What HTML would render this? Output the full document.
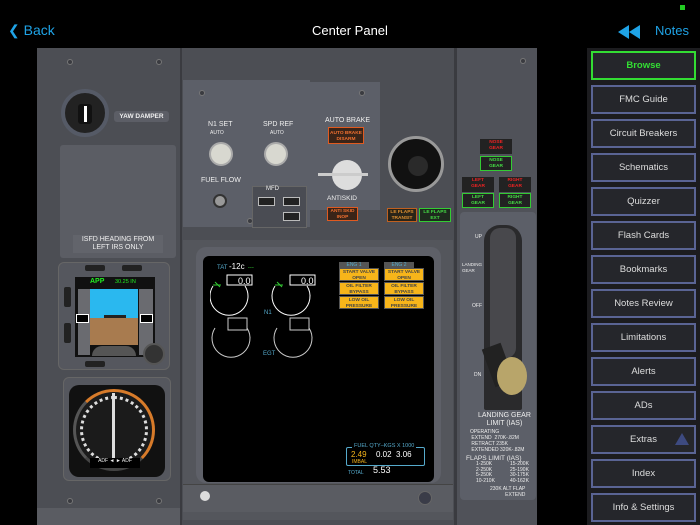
<!DOCTYPE html>
<html><head><meta charset="utf-8"><style>
*{margin:0;padding:0;box-sizing:border-box}
body{width:700px;height:525px;background:#000;position:relative;overflow:hidden;font-family:"Liberation Sans",sans-serif}
.a{position:absolute}
.t{position:absolute;white-space:nowrap}
.btn{position:absolute;left:591px;width:105px;height:29px;background:#25262b;border:2px solid #5a6494;color:#ddd;font-size:9.5px;text-align:center;line-height:25px}
.scr{position:absolute;width:6px;height:6px;border-radius:50%;background:#3a3b40;border:1px solid #777}
.ann{position:absolute;font-size:4.8px;text-align:center;line-height:5.5px;font-weight:bold;padding-top:1px;overflow:hidden}
</style></head><body>
<div class="a" style="left:680px;top:5px;width:5px;height:5px;background:#2c2"></div>
<div class="t" style="left:8px;top:22px;color:#1fa3e6;font-size:14px">&#x276E;&nbsp;Back</div>
<div class="t" style="left:0;width:700px;top:23px;text-align:center;color:#fff;font-size:13px">Center Panel</div>
<svg class="a" style="left:618px;top:25px" width="24" height="14"><polygon points="0,7 11,0 11,14" fill="#1fa3e6"/><polygon points="11,7 22,0 22,14" fill="#1fa3e6"/></svg>
<div class="t" style="left:655px;top:23px;color:#1fa3e6;font-size:13px">Notes</div>

<div class="a" style="left:37px;top:48px;width:500px;height:477px;background:#4c4e54"></div>
<div class="a" style="left:180px;top:48px;width:2px;height:477px;background:#3a3b40"></div>
<div class="a" style="left:454px;top:48px;width:3px;height:477px;background:#3a3b40"></div>
<div class="a" style="left:457px;top:48px;width:80px;height:477px;background:#505259"></div>
<div class="a" style="left:37px;top:508px;width:143px;height:17px;background:#5a5c62"></div>
<div class="scr" style="left:67px;top:59px"></div><div class="scr" style="left:156px;top:59px"></div>
<div class="scr" style="left:67px;top:498px"></div><div class="scr" style="left:156px;top:498px"></div>
<div class="a" style="left:61px;top:89px;width:48px;height:48px;border-radius:50%;background:#222;border:4px solid #555a66"></div>
<div class="a" style="left:78px;top:104px;width:14px;height:20px;background:#111;border-radius:3px"></div>
<div class="a" style="left:84px;top:106px;width:3px;height:16px;background:#fff"></div>
<div class="t" style="left:114px;top:111px;width:55px;height:11px;background:#5c5e66;border-radius:3px;color:#eee;font-size:6.5px;font-weight:bold;text-align:center;line-height:11px">YAW DAMPER</div>
<div class="a" style="left:60px;top:145px;width:116px;height:113px;background:#5b5d64;border-radius:3px"></div>
<div class="t" style="left:73px;top:235px;width:90px;height:18px;background:#62646b;color:#eee;font-size:7px;text-align:center;line-height:8px;padding-top:1px">ISFD HEADING FROM<br>LEFT IRS ONLY</div>
<div class="a" style="left:58px;top:262px;width:112px;height:108px;background:#55575e;border-radius:6px;border:1px solid #666"></div>
<div class="a" style="left:75px;top:277px;width:80px;height:80px;background:#111"></div>
<div class="a" style="left:90px;top:289px;width:48px;height:29px;background:#2ab8ef"></div>
<div class="a" style="left:90px;top:318px;width:48px;height:27px;background:#a87b4f"></div>
<div class="a" style="left:78px;top:289px;width:12px;height:66px;background:#6a6b70"></div>
<div class="a" style="left:139px;top:289px;width:14px;height:66px;background:#6a6b70"></div>
<div class="t" style="left:90px;top:278px;color:#2e2;font-size:7px;font-weight:bold">APP</div>
<div class="t" style="left:115px;top:279px;color:#2e2;font-size:5.5px">30.25 IN</div>
<div class="a" style="left:104px;top:315px;width:22px;height:3px;background:#222"></div>
<div class="a" style="left:140px;top:314px;width:13px;height:9px;background:#000;border:1px solid #fff"></div>
<div class="a" style="left:76px;top:314px;width:13px;height:9px;background:#000;border:1px solid #fff"></div>
<div class="a" style="left:92px;top:346px;width:44px;height:10px;background:#555;border-radius:20px 20px 0 0"></div>
<div class="a" style="left:64px;top:287px;width:7px;height:20px;background:#222;border-radius:2px"></div>
<div class="a" style="left:64px;top:323px;width:7px;height:20px;background:#222;border-radius:2px"></div>
<div class="a" style="left:143px;top:343px;width:22px;height:22px;border-radius:50%;background:#333;border:2px solid #555"></div>
<div class="a" style="left:85px;top:265px;width:20px;height:6px;background:#222;border-radius:2px"></div>
<div class="a" style="left:122px;top:265px;width:20px;height:6px;background:#222;border-radius:2px"></div>
<div class="a" style="left:85px;top:361px;width:20px;height:6px;background:#222;border-radius:2px"></div>
<div class="a" style="left:63px;top:377px;width:108px;height:104px;background:#55575e;border-radius:6px;border:1px solid #666"></div>
<div class="a" style="left:69px;top:385px;width:96px;height:92px;background:#111;border-radius:10px"></div>
<div class="a" style="left:73px;top:389px;width:82px;height:82px;border-radius:50%;background:#1b1b1b;border:3px solid #d77b2a;border-bottom-color:#444;border-left-color:#555"></div>
<div class="a" style="left:80px;top:396px;width:68px;height:68px;border-radius:50%;border:3px dotted #ddd"></div>
<div class="a" style="left:112px;top:393px;width:3px;height:72px;background:#ddd"></div>
<div class="a" style="left:90px;top:458px;width:50px;height:10px;background:#000;color:#eee;font-size:5px;text-align:center">ADF ◄ ► ADF</div>
<div class="a" style="left:183px;top:80px;width:127px;height:147px;background:#5c5f68"></div>
<div class="a" style="left:310px;top:82px;width:70px;height:128px;background:#5c5f68"></div>
<div class="scr" style="left:199px;top:90px"></div><div class="scr" style="left:359px;top:90px"></div>
<div class="scr" style="left:332px;top:212px"></div><div class="scr" style="left:247px;top:218px"></div>
<div class="t" style="left:208px;top:121px;color:#eee;font-size:7px">N1 SET</div>
<div class="t" style="left:210px;top:130px;color:#eee;font-size:5px">AUTO</div>
<div class="t" style="left:263px;top:121px;color:#eee;font-size:7px">SPD REF</div>
<div class="t" style="left:270px;top:130px;color:#eee;font-size:5px">AUTO</div>
<div class="a" style="left:211px;top:144px;width:20px;height:20px;border-radius:50%;background:#d8d8d0;box-shadow:0 0 0 2px #aaa"></div>
<div class="a" style="left:266px;top:144px;width:20px;height:20px;border-radius:50%;background:#d8d8d0;box-shadow:0 0 0 2px #aaa"></div>
<div class="t" style="left:201px;top:177px;color:#eee;font-size:7px">FUEL FLOW</div>
<div class="a" style="left:213px;top:194px;width:14px;height:14px;border-radius:50%;background:#999;border:2px solid #333"></div>
<div class="a" style="left:252px;top:186px;width:55px;height:42px;background:#4a4c53;border:1px solid #666"></div>
<div class="t" style="left:266px;top:186px;color:#eee;font-size:6px">MFD</div>
<div class="a" style="left:258px;top:197px;width:17px;height:9px;background:#222;border:1px solid #bbb"></div>
<div class="a" style="left:283px;top:197px;width:17px;height:9px;background:#222;border:1px solid #bbb"></div>
<div class="a" style="left:283px;top:212px;width:17px;height:9px;background:#222;border:1px solid #bbb"></div>
<div class="t" style="left:325px;top:117px;color:#eee;font-size:7px">AUTO BRAKE</div>
<div class="ann" style="left:328px;top:127px;width:36px;height:17px;background:#3a2418;border:1px solid #e05a20;color:#f07030;padding-top:3px">AUTO BRAKE<br>DISARM</div>
<div class="a" style="left:332px;top:160px;width:30px;height:30px;border-radius:50%;background:#ddd"></div>
<div class="a" style="left:318px;top:173px;width:50px;height:3px;background:#ccc"></div>
<div class="t" style="left:327px;top:195px;color:#eee;font-size:6.5px">ANTISKID</div>
<div class="ann" style="left:327px;top:207px;width:31px;height:14px;background:#3a2418;border:1px solid #e05a20;color:#f07030">ANTI SKID<br>INOP</div>
<div class="a" style="left:388px;top:136px;width:56px;height:56px;border-radius:50%;background:#111;border:3px solid #999"></div>
<div class="a" style="left:408px;top:156px;width:20px;height:20px;border-radius:50%;background:#2a2a2a"></div>
<div class="ann" style="left:387px;top:208px;width:30px;height:14px;background:#2a2418;border:1px solid #c06020;color:#e09030">LE FLAPS<br>TRANSIT</div>
<div class="ann" style="left:419px;top:208px;width:32px;height:14px;background:#1e2a1e;border:1px solid #3c3;color:#4d4">LE FLAPS<br>EXT</div>
<div class="a" style="left:183px;top:240px;width:270px;height:280px;background:#54565c"></div>
<div class="a" style="left:196px;top:247px;width:245px;height:236px;background:#5e6068;border-radius:10px"></div>
<div class="a" style="left:203px;top:256px;width:231px;height:226px;background:#000;border-radius:6px"></div>
<div class="a" style="left:183px;top:484px;width:270px;height:28px;background:#5a5c62;border-top:1px solid #444"></div>
<div class="a" style="left:200px;top:491px;width:10px;height:10px;border-radius:50%;background:#ddd"></div>
<div class="a" style="left:418px;top:491px;width:14px;height:14px;border-radius:50%;background:#3a3c48;border:1px solid #666"></div>
<div class="t" style="left:217px;top:262px;color:#5ac;font-size:6px">TAT <span style="color:#fff;font-size:8px">-12c</span> <span style="color:#3c3">&nbsp;---</span></div>
<svg class="a" style="left:210px;top:270px" width="150" height="100" fill="none">
<path d="M3 16 A19 19 0 1 0 35 16" stroke="#fff" stroke-width="1"/>
<path d="M65 16 A19 19 0 1 0 97 16" stroke="#fff" stroke-width="1"/>
<rect x="17" y="5" width="25" height="10" stroke="#fff"/><rect x="80" y="5" width="25" height="10" stroke="#fff"/>
<text x="28" y="14" fill="#fff" font-size="9" font-family="Liberation Sans">0.0</text>
<text x="91" y="14" fill="#fff" font-size="9" font-family="Liberation Sans">0.0</text>
<path d="M5 58 A19 19 0 1 0 37 58" stroke="#ccc"/><path d="M67 58 A19 19 0 1 0 99 58" stroke="#ccc"/>
<rect x="18" y="48" width="19" height="12" stroke="#ccc"/><rect x="80" y="48" width="19" height="12" stroke="#ccc"/>
<path d="M5 12 l5 5 M3 15 l8 0" stroke="#3c3"/><path d="M67 12 l5 5 M65 15 l8 0" stroke="#3c3"/>
<text x="54" y="44" fill="#5ac" font-size="6" font-family="Liberation Sans">N1</text>
<text x="53" y="85" fill="#5ac" font-size="6" font-family="Liberation Sans">EGT</text>
</svg>
<div class="t" style="left:339px;top:262px;width:30px;color:#5ac;font-size:5px;text-align:center;background:#555">ENG 1</div>
<div class="t" style="left:384px;top:262px;width:30px;color:#5ac;font-size:5px;text-align:center;background:#555">ENG 2</div>
<div class="ann" style="left:339px;top:268px;width:40px;height:13px;background:#f7b51a;color:#444;border:1px solid #555">START VALVE<br>OPEN</div>
<div class="ann" style="left:339px;top:282px;width:40px;height:13px;background:#f7b51a;color:#444;border:1px solid #555">OIL FILTER<br>BYPASS</div>
<div class="ann" style="left:339px;top:296px;width:40px;height:13px;background:#f7b51a;color:#444;border:1px solid #555">LOW OIL<br>PRESSURE</div>
<div class="ann" style="left:384px;top:268px;width:40px;height:13px;background:#f7b51a;color:#444;border:1px solid #555">START VALVE<br>OPEN</div>
<div class="ann" style="left:384px;top:282px;width:40px;height:13px;background:#f7b51a;color:#444;border:1px solid #555">OIL FILTER<br>BYPASS</div>
<div class="ann" style="left:384px;top:296px;width:40px;height:13px;background:#f7b51a;color:#444;border:1px solid #555">LOW OIL<br>PRESSURE</div>
<div class="a" style="left:346px;top:447px;width:79px;height:19px;border:1px solid #5ac;border-radius:2px"></div>
<div class="t" style="left:352px;top:443px;background:#000;color:#5ac;font-size:5.5px;padding:0 2px">FUEL QTY–KGS X 1000</div>
<div class="t" style="left:351px;top:450px;color:#f7b51a;font-size:8px">2.49</div>
<div class="t" style="left:376px;top:450px;color:#fff;font-size:8px">0.02&nbsp;&nbsp;3.06</div>
<div class="t" style="left:352px;top:459px;color:#f7b51a;font-size:5px">IMBAL</div>
<div class="t" style="left:348px;top:470px;color:#5ac;font-size:5px">TOTAL</div>
<div class="t" style="left:373px;top:465px;color:#fff;font-size:9px">5.53</div>
<div class="ann" style="left:480px;top:139px;width:32px;height:15px;background:#222;color:#e22">NOSE<br>GEAR</div>
<div class="ann" style="left:480px;top:156px;width:32px;height:15px;background:#222;border:1px solid #3c3;color:#4d4">NOSE<br>GEAR</div>
<div class="ann" style="left:462px;top:177px;width:32px;height:15px;background:#222;color:#e22">LEFT<br>GEAR</div>
<div class="ann" style="left:462px;top:193px;width:32px;height:15px;background:#222;border:1px solid #3c3;color:#4d4">LEFT<br>GEAR</div>
<div class="ann" style="left:499px;top:177px;width:32px;height:15px;background:#222;color:#e22">RIGHT<br>GEAR</div>
<div class="ann" style="left:499px;top:193px;width:32px;height:15px;background:#222;border:1px solid #3c3;color:#4d4">RIGHT<br>GEAR</div>
<div class="a" style="left:460px;top:212px;width:76px;height:288px;background:#5c5f68;border-radius:4px"></div>
<div class="a" style="left:484px;top:225px;width:38px;height:185px;background:#2a2a2c;border-radius:16px 16px 2px 2px"></div>
<div class="a" style="left:490px;top:228px;width:26px;height:130px;background:#48484c;border-radius:10px"></div>
<div class="a" style="left:488px;top:345px;width:20px;height:40px;background:#222;transform:rotate(-20deg)"></div>
<div class="a" style="left:497px;top:357px;width:30px;height:38px;background:#b8a56a;border-radius:50%"></div>
<div class="t" style="left:475px;top:234px;color:#eee;font-size:5px">UP</div>
<div class="t" style="left:472px;top:303px;color:#eee;font-size:5px">OFF</div>
<div class="t" style="left:474px;top:372px;color:#eee;font-size:5px">DN</div>
<div class="t" style="left:462px;top:262px;width:5px;color:#eee;font-size:4.5px;line-height:6px;white-space:normal">LANDING GEAR</div>
<div class="t" style="left:478px;top:412px;color:#eee;font-size:7px;text-align:center;line-height:8px">LANDING GEAR<br>LIMIT (IAS)</div>
<div class="t" style="left:470px;top:429px;color:#eee;font-size:5px;line-height:6px">OPERATING<br>&nbsp;EXTEND&nbsp; 270K-.82M<br>&nbsp;RETRACT 235K<br>&nbsp;EXTENDED 320K-.82M</div>
<div class="t" style="left:466px;top:455px;color:#eee;font-size:6.5px">FLAPS LIMIT (IAS)</div>
<div class="t" style="left:476px;top:462px;color:#eee;font-size:5px;line-height:5.5px">1-250K<br>2-250K<br>5-250K<br>10-210K</div>
<div class="t" style="left:510px;top:462px;color:#eee;font-size:5px;line-height:5.5px">15-200K<br>25-190K<br>30-175K<br>40-162K</div>
<div class="t" style="left:490px;top:486px;color:#eee;font-size:5px;line-height:6px;text-align:right">230K ALT FLAP<br>EXTEND</div>
<div class="scr" style="left:520px;top:58px"></div>
<div class="a" style="left:587px;top:48px;width:113px;height:477px;background:#1c1c1f"></div>
<div class="btn" style="top:51px;border-color:#3d3;color:#3d3;font-weight:bold">Browse</div>
<div class="btn" style="top:85px">FMC Guide</div>
<div class="btn" style="top:119px">Circuit Breakers</div>
<div class="btn" style="top:153px">Schematics</div>
<div class="btn" style="top:187px">Quizzer</div>
<div class="btn" style="top:221px">Flash Cards</div>
<div class="btn" style="top:255px">Bookmarks</div>
<div class="btn" style="top:289px">Notes Review</div>
<div class="btn" style="top:323px">Limitations</div>
<div class="btn" style="top:357px">Alerts</div>
<div class="btn" style="top:391px">ADs</div>
<div class="btn" style="top:425px">Extras</div>
<svg class="a" style="left:675px;top:433px" width="14" height="12"><polygon points="7,0 14,12 0,12" fill="#3d4a80"/></svg>
<div class="btn" style="top:459px">Index</div>
<div class="btn" style="top:493px">Info &amp; Settings</div>
</body></html>
